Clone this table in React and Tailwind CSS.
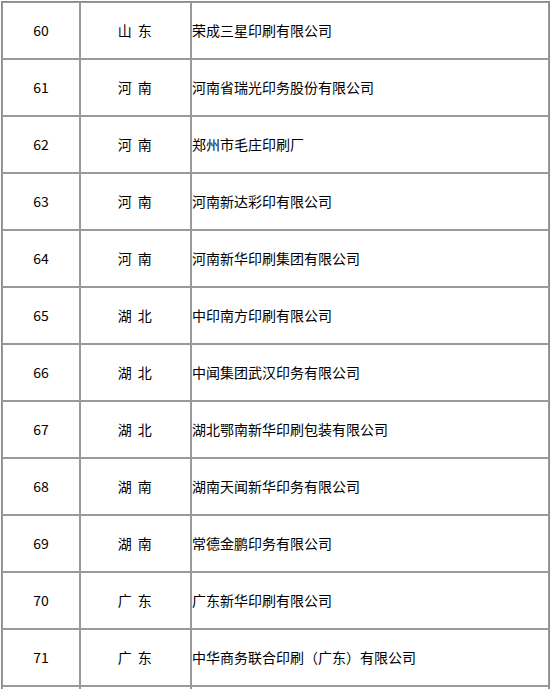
import React from 'react';

const rows = [
    ['60', '山 东', '荣成三星印刷有限公司'],
    ['61', '河 南', '河南省瑞光印务股份有限公司'],
    ['62', '河 南', '郑州市毛庄印刷厂'],
    ['63', '河 南', '河南新达彩印有限公司'],
    ['64', '河 南', '河南新华印刷集团有限公司'],
    ['65', '湖 北', '中印南方印刷有限公司'],
    ['66', '湖 北', '中闻集团武汉印务有限公司'],
    ['67', '湖 北', '湖北鄂南新华印刷包装有限公司'],
    ['68', '湖 南', '湖南天闻新华印务有限公司'],
    ['69', '湖 南', '常德金鹏印务有限公司'],
    ['70', '广 东', '广东新华印刷有限公司'],
    ['71', '广 东', '中华商务联合印刷（广东）有限公司'],
    ['', '', ''],
];

const cell = 'h-[57px] border border-[#9a9a9a] flex items-center pb-px';

const App = () => {
    return (
        <div className="w-[553px] h-[689px] overflow-hidden bg-white">
            <div
                className="ml-px mt-px w-[549px] border border-[#8c8c8c] text-black text-[14px]"
                style={{ fontFamily: '"Noto Sans CJK SC", "Noto Sans", sans-serif' }}
            >
                {rows.map(([no, prov, name], i) => (
                    <div key={i} className="grid grid-cols-[78px_111px_1fr]">
                        <div className={`${cell} justify-center`}>{no}</div>
                        <div className={`${cell} justify-center tracking-[1.5px]`}>{prov}</div>
                        <div className={`${cell} justify-start whitespace-nowrap`}>{name}</div>
                    </div>
                ))}
            </div>
        </div>
    );
};

export default App;
